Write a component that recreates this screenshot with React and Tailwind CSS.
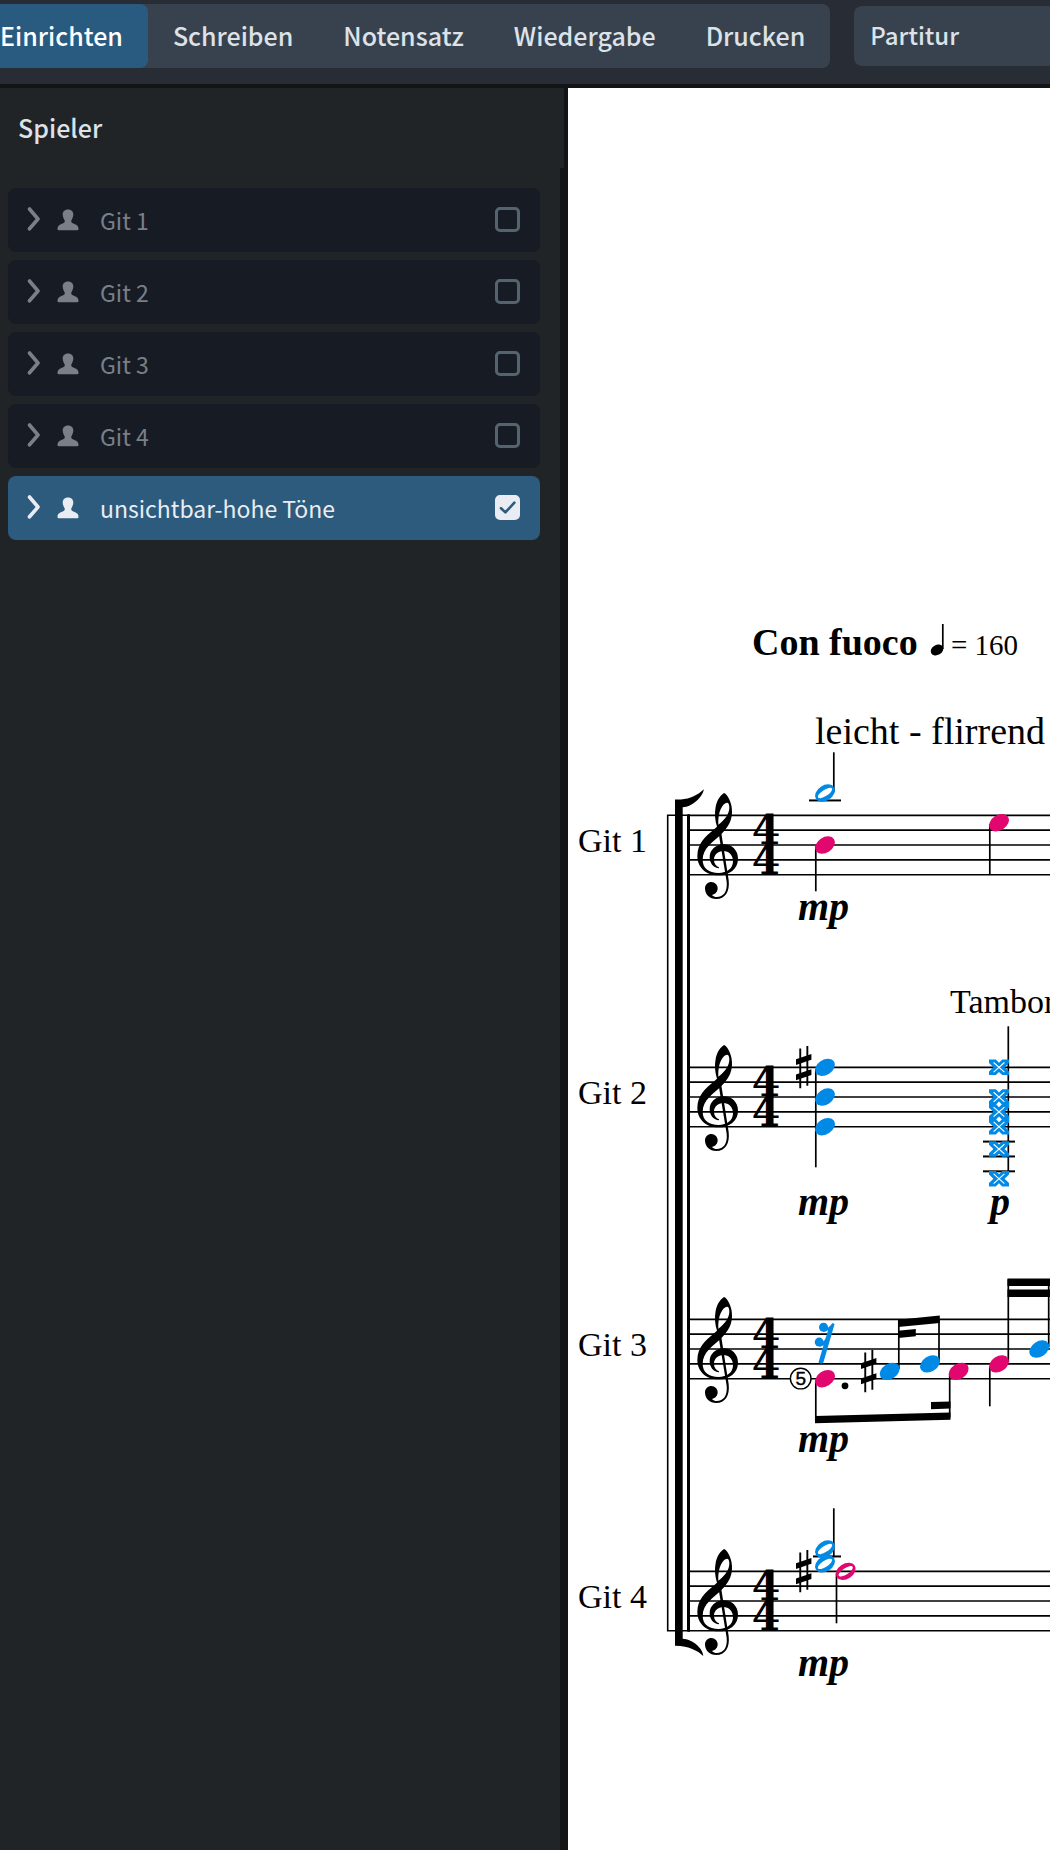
import { useState } from "react";

const BLUE = "#008ae6";
const PINK = "#e1076f";
const MODES = ["Einrichten", "Schreiben", "Notensatz", "Wiedergabe", "Drucken"];
const PLAYERS = ["Git 1", "Git 2", "Git 3", "Git 4", "unsichtbar-hohe Töne"];

/* ---------- Interface ---------- */

function ModeBar() {
  const [mode, setMode] = useState("Einrichten");
  return (
    <header className="flex h-[88px] shrink-0 gap-6 border-b-4 border-[#131416] bg-[#282c34] pt-1 pb-4 text-[#dde2e8]">
      <nav className="flex h-16 shrink-0 overflow-hidden rounded-r-lg bg-[#38424e]">
        {MODES.map((m) => (
          <button
            key={m}
            type="button"
            aria-pressed={m === mode}
            onClick={() => setMode(m)}
            className="px-[25px] pb-[2px] text-[25px] leading-8 font-medium first:pl-0 aria-pressed:rounded-r-lg aria-pressed:bg-[#295a80] aria-pressed:text-white"
          >
            {m}
          </button>
        ))}
      </nav>
      <select
        aria-label="Layout"
        className="mt-[2px] h-[60px] min-w-0 flex-1 appearance-none rounded-l-lg bg-[#38424e] px-4 pb-[2px] text-2xl font-medium"
      >
        <option>Partitur</option>
      </select>
    </header>
  );
}

function Chevron() {
  return (
    <svg viewBox="0 0 14 26" className="h-[26px] w-[14px]" fill="none" stroke="currentColor" strokeWidth="3.6" strokeLinecap="round" strokeLinejoin="round" aria-hidden="true">
      <path d="M2.5 3 L11 13 L2.5 22.8" />
    </svg>
  );
}

function Person() {
  return (
    <svg viewBox="0 0 22 22" className="h-[22px] w-[22px]" fill="currentColor" aria-hidden="true">
      <path d="M11 .4C14.6 .4 16.4 2.8 16.3 5.6C16.2 8 15.4 9.6 14.4 11.2C14 12.4 14.2 13.2 15 13.8C16.6 14.8 18.8 15.4 20.2 16.6C21.4 17.8 21.6 19.4 21.4 20.6Q21.3 21.2 20.6 21.2H1.4Q.7 21.2 .6 20.6C.4 19.4 .6 17.8 1.8 16.6C3.2 15.4 5.4 14.8 7 13.8C7.8 13.2 8 12.4 7.6 11.2C6.6 9.6 5.8 8 5.7 5.6C5.6 2.8 7.4 .4 11 .4Z" />
    </svg>
  );
}

function PlayerRow({ name, initial }) {
  const [on, setOn] = useState(initial);
  return (
    <li className={on ? "flex h-16 items-center rounded-lg bg-[#2c5b7e] pr-5 pl-[19px] text-[#e9edf3]" : "flex h-16 items-center rounded-lg bg-[#171c24] pr-5 pl-[19px] text-[#7b7f88]"}>
      <button type="button" aria-label={name + " aufklappen"} className="-mt-[2px]">
        <Chevron />
      </button>
      <span className="mr-[21px] ml-4">
        <Person />
      </span>
      <label className="flex flex-1 items-center justify-between text-[23px] leading-8">
        <span>{name}</span>
        <span className="-mt-px grid">
          <input
            type="checkbox"
            checked={on}
            onChange={(e) => setOn(e.target.checked)}
            className="col-start-1 row-start-1 size-[25px] appearance-none rounded-[5px] border-[3px] border-[#556371] checked:border-[#e9edf3] checked:bg-[#e9edf3]"
          />
          {on && (
            <svg viewBox="0 0 25 25" className="pointer-events-none col-start-1 row-start-1 size-[25px]" fill="none" stroke="#2c5b7e" strokeWidth="2.6" strokeLinecap="round" strokeLinejoin="round" aria-hidden="true">
              <path d="M6 13.2 L10.4 17.4 L19.4 7.6" />
            </svg>
          )}
        </span>
      </label>
    </li>
  );
}

function PlayersPanel() {
  return (
    <aside className="flex w-[568px] shrink-0 flex-col bg-[#202427]">
      <h2 className="h-20 border-r-4 border-[#131416] pt-[23px] pl-[18px] text-[25px] leading-8 font-medium text-[#dde2e8]">Spieler</h2>
      <div className="flex-1 border-r-8 border-[#131416] pt-5 pr-5 pl-2">
        <ul className="flex flex-col gap-2">
          {PLAYERS.map((p, i) => (
            <PlayerRow key={p} name={p} initial={i === 4} />
          ))}
        </ul>
      </div>
    </aside>
  );
}

/* ---------- Score ---------- */

const STEP = 7.43;

function Clef() {
  return (
    <g transform="translate(92 -35.3) scale(.33333)">
      <path
        fillRule="evenodd"
        d="M193 39C206 48 217 72 216 98C215 124 203 143 184 162C160 186 128 204 128 240C128 264 146 279 176 279C200 279 219 266 219 244C219 225 206 213 190 213C174 213 162 224 162 239C162 251 168 258 177 262C178 263 177 265 175 265C160 262 149 250 149 232C149 210 167 193 191 193C216 193 234 211 234 236C234 267 208 286 175 286C138 286 112 262 112 228C112 190 136 170 160 150L171 140C165 122 163 100 167 80C171 60 182 44 193 39ZM201 68C188 70 173 94 175 134C190 122 208 104 208 83C208 74 206 68 201 68Z"
      />
      <path d="M172 136L180 134L206 300C210 335 195 357 169 357C149 357 135 344 135 325C135 314 144 306 154 306C165 306 173 315 173 325C173 335 166 343 156 345C160 349 165 351 170 351C190 351 203 335 200 305Z" />
    </g>
  );
}

function Head({ x, n, color = "#000" }) {
  return <ellipse rx="10.8" ry="7.6" fill={color} transform={`translate(${x} ${n * STEP}) rotate(-33)`} />;
}

function HalfHead({ x, n, color }) {
  return (
    <g transform={`translate(${x} ${n * STEP}) rotate(-33)`}>
      <path fillRule="evenodd" fill={color} d="M-10.8 0a10.8 7.6 0 1 0 21.6 0a10.8 7.6 0 1 0-21.6 0ZM-8.3 0a8.3 3.1 0 1 0 16.6 0a8.3 3.1 0 1 0-16.6 0Z" />
    </g>
  );
}

function XHead({ x, n }) {
  return (
    <g transform={`translate(${x} ${n * STEP})`}>
      <path fill={BLUE} d="M-10-7.8H-3.2L0-4.6L3.2-7.8H10V-4.2L5.6 0L10 4.2V7.8H3.2L0 4.6L-3.2 7.8H-10V4.2L-5.6 0L-10-4.2Z" />
      <path stroke="#fff" strokeWidth="1.1" d="M-5.4-4.8L5.4 4.8M-5.4 4.8L5.4-4.8" />
    </g>
  );
}

function Sharp({ x, n }) {
  return (
    <g transform={`translate(${x} ${n * STEP})`}>
      <path d="M-4.5-18.8h1.9V21h-1.9ZM2.6-21.3h1.9V18.4H2.6ZM-7.8-8L7.6-13.3V-7.6L-7.8-2.3ZM-7.8 7.3L7.6 2V7.8L-7.8 13Z" />
    </g>
  );
}

function Line({ x, y1, y2 }) {
  return <path d={`M${x} ${y1}V${y2}`} stroke="#000" strokeWidth="1.7" />;
}

function Ledger({ x1 = 241, x2 = 273, n }) {
  return <path d={`M${x1} ${n * STEP}H${x2}`} stroke="#000" strokeWidth="2" />;
}

function Dynamic({ x = 230, y, children }) {
  return (
    <text x={x} y={y} fontSize="40" fontWeight="bold" fontStyle="italic">
      {children}
    </text>
  );
}

function Staff({ y, name, children }) {
  return (
    <g transform={`translate(0 ${y})`}>
      {[0, 2, 4, 6, 8].map((n) => (
        <line key={n} x1="120" x2="100%" y1={n * STEP} y2={n * STEP} stroke="#000" strokeWidth="1.7" />
      ))}
      <text x="10" y="37" fontSize="34">{name}</text>
      <Clef />
      <g fontFamily="'DejaVu Serif', serif" fontWeight="bold" fontSize="41" textAnchor="middle">
        <text x="198" y="29">4</text>
        <text x="198" y="59">4</text>
      </g>
      {children}
    </g>
  );
}

function Score() {
  return (
    <svg className="block h-[1640px] w-full font-['Liberation_Serif',serif]" role="img" aria-label="Partitur">
      <text x="184" y="567" fontSize="38" fontWeight="bold">Con fuoco</text>
      <ellipse rx="6.7" ry="5" transform="translate(369 562) rotate(-30)" />
      <Line x={374.8} y1={536} y2={561} />
      <text x="383" y="567" fontSize="29">= 160</text>
      <text x="247" y="656" fontSize="38">leicht - flirrend</text>
      <text x="382" y="925" fontSize="34">Tambora</text>

      <path d="M122 727.3H99.7V1542.7H122" fill="none" stroke="#000" strokeWidth="1.6" />
      <path d="M107 711.5H113C122 711 130 707 135.8 701.3C135 709 124 719 114.7 719.3V1550.7C124 1551 135 1560 135.3 1568C130 1563 122 1558 107 1557.7Z" />
      <path d="M119 726.5H122V1543.5H119Z" />

      <Staff y={727.3} name="Git 1">
        <Ledger n={-2} />
        <Line x={265.8} y1={-63} y2={-23} />
        <HalfHead x={257} n={-3} color={BLUE} />
        <Line x={247.8} y1={31} y2={76} />
        <Head x={257} n={4} color={PINK} />
        <Line x={421.8} y1={9} y2={59} />
        <Head x={431} n={1} color={PINK} />
        <Dynamic y={105}>mp</Dynamic>
      </Staff>

      <Staff y={979.3} name="Git 2">
        <Sharp x={235.8} n={0} />
        <Line x={247.8} y1={2} y2={100} />
        <Head x={257} n={0} color={BLUE} />
        <Head x={257} n={4} color={BLUE} />
        <Head x={257} n={8} color={BLUE} />
        <Line x={440.3} y1={-41} y2={106} />
        <Ledger x1={415} x2={447} n={10} />
        <Ledger x1={415} x2={447} n={12} />
        <Ledger x1={415} x2={447} n={14} />
        {[0, 4, 6, 8, 11, 15].map((n) => (
          <XHead key={n} x={431} n={n} />
        ))}
        <Dynamic y={148}>mp</Dynamic>
        <Dynamic x={422} y={148}>p</Dynamic>
      </Staff>

      <Staff y={1231.3} name="Git 3">
        <g fill={BLUE}>
          <circle cx="255.5" cy="8" r="4.5" />
          <circle cx="251.2" cy="22.8" r="4.5" />
          <path d="M264.3 3.6L266.6 4.6L255.4 43.2Q253 45.2 250.5 43.2L255.5 26Q253.5 27.2 251 27.2V24.5Q256 23.4 258 18L260 11Q258 12.6 255 12.4V9.4Q261.5 9 264.3 3.6Z" />
        </g>
        <circle cx="232.7" cy="59.3" r="10.3" fill="#fff" stroke="#000" strokeWidth="1.4" />
        <text x="232.7" y="66" fontSize="19" textAnchor="middle" fontFamily="'Liberation Sans', sans-serif" stroke="#000" strokeWidth=".4">5</text>
        <Line x={247.8} y1={61} y2={102} />
        <Head x={257} n={8} color={PINK} />
        <circle cx="277" cy="66.5" r="3.4" />
        <Sharp x={300.8} n={7} />
        <Line x={330.8} y1={2} y2={50} />
        <Line x={371} y1={0} y2={43} />
        <path d="M330 .5L371.8-3.7V3.6L330 7.7ZM330 11.5L347.8 9.8V17L330 18.8Z" />
        <Head x={321.7} n={7} color={BLUE} />
        <Head x={362} n={6} color={BLUE} />
        <Line x={381.7} y1={54} y2={98} />
        <path d="M247 96.8L382.5 93.2V100.4L247 104ZM363 82.8L382.5 82.2V89.3L363 90Z" />
        <Head x={390.7} n={7} color={PINK} />
        <Line x={421.8} y1={47} y2={87} />
        <Line x={440.3} y1={-40} y2={43} />
        <Line x={480.7} y1={-40} y2={28} />
        <path d="M439.5-40.8H482V-33.4H439.5ZM439.5-29.8H482V-22.4H439.5Z" />
        <Head x={431} n={6} color={PINK} />
        <Head x={471.3} n={4} color={BLUE} />
        <Dynamic y={133}>mp</Dynamic>
      </Staff>

      <Staff y={1483.3} name="Git 4">
        <Sharp x={235.8} n={0} />
        <Ledger x1={245} n={-2} />
        <Line x={265.8} y1={-63} y2={-14} />
        <HalfHead x={257} n={-3} color={BLUE} />
        <HalfHead x={257} n={-1} color={BLUE} />
        <Line x={268.5} y1={2} y2={52} />
        <HalfHead x={277.7} n={0} color={PINK} />
        <Dynamic y={105}>mp</Dynamic>
      </Staff>
    </svg>
  );
}

export default function App() {
  return (
    <div className="flex min-h-screen flex-col font-['Noto_Sans_CJK_SC','Open_Sans',sans-serif]">
      <ModeBar />
      <div className="flex flex-1">
        <PlayersPanel />
        <main className="min-w-0 flex-1 overflow-hidden bg-white">
          <Score />
        </main>
      </div>
    </div>
  );
}
